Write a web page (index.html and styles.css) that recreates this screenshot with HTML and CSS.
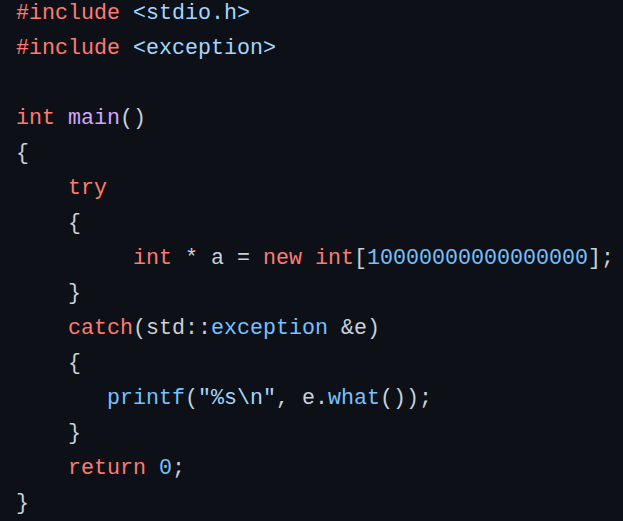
FILE: index.html
```html
<!DOCTYPE html>
<html>
<head>
<meta charset="utf-8">
<link rel="stylesheet" href="styles.css">
</head>
<body>
<pre class="code"><code class="src"><span class="kw">#include</span> <span class="str">&lt;stdio.h&gt;</span>
<span class="kw">#include</span> <span class="str">&lt;exception&gt;</span>

<span class="kw">int</span> <span class="fn">main</span>()
{
    <span class="kw">try</span>
    {
         <span class="kw">int</span> * a = <span class="kw">new</span> <span class="kw">int</span>[<span class="num">10000000000000000</span>];
    }
    <span class="kw">catch</span>(std::<span class="num">exception</span> &amp;e)
    {
       <span class="num">printf</span>(<span class="str">"%s\n"</span>, e.<span class="num">what</span>());
    }
    <span class="kw">return</span> <span class="num">0</span>;
}</code></pre>
</body>
</html>
```
FILE: styles.css
```css
html, body {
  margin: 0;
  padding: 0;
  background: #0d1117;
  overflow: hidden;
}
.code {
  margin: -4px 0 0 0;
  padding: 0 16px;
  font-family: "Liberation Mono", monospace;
  font-size: 21.67px;
  line-height: 35px;
  color: #c9d1d9;
  white-space: pre;
}
.src {
  font: inherit;
  line-height: inherit;
}
.kw { color: #ff7b72; }
.str { color: #a5d6ff; }
.num { color: #79c0ff; }
.fn { color: #d2a8ff; }
```
